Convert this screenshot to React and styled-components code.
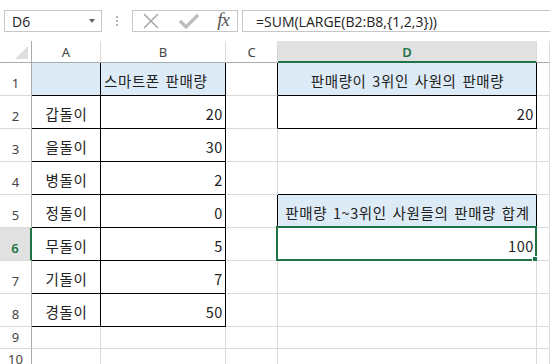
import React from 'react';
import styled, { createGlobalStyle } from 'styled-components';

const GlobalStyle = createGlobalStyle`
  html, body {
    margin: 0;
    padding: 0;
    background: #fff;
    overflow: hidden;
  }
  body {
    font-family: "Noto Sans CJK KR", "Noto Sans", sans-serif;
  }
`;

const GREEN = '#217346';
const GRID = '#dadada';
const HEAD_LINE = '#ababab';

const Page = styled.div`
  width: 550px;
  height: 364px;
  overflow: hidden;
  display: flex;
  flex-direction: column;
`;

const FormulaBar = styled.div`
  display: flex;
  align-items: stretch;
  height: 26px;
  padding: 10px 0 9px 4px;
`;

const NameBox = styled.div`
  width: 98px;
  box-sizing: border-box;
  border: 1px solid #c6c6c6;
  display: flex;
  align-items: center;
  justify-content: space-between;
  padding: 0 6px 0 7px;
  font-family: "Open Sans", "Noto Sans", sans-serif;
  font-size: 14px;
  color: #222;
`;

const Caret = styled.span`
  width: 0;
  height: 0;
  border-left: 3.5px solid transparent;
  border-right: 3.5px solid transparent;
  border-top: 4px solid #666;
`;

const Grip = styled.div`
  width: 30px;
  display: flex;
  flex-direction: column;
  align-items: center;
  justify-content: center;
  gap: 2px;
  & > span {
    width: 2px;
    height: 2px;
    background: #b5b5b5;
  }
`;

const ButtonGroup = styled.div`
  width: 106px;
  box-sizing: border-box;
  border: 1px solid #c6c6c6;
  display: flex;
  align-items: center;
  padding: 0 8px 0 9px;
  justify-content: space-between;
`;

const Fx = styled.span`
  font-family: "Liberation Serif", serif;
  font-style: italic;
  font-size: 19px;
  color: #555;
  letter-spacing: -1px;
  margin-top: -2px;
`;

const FormulaInput = styled.div`
  flex: 1;
  margin-left: 4px;
  box-sizing: border-box;
  border: 1px solid #c6c6c6;
  border-right: none;
  display: flex;
  align-items: center;
  padding-left: 13px;
  font-family: "Open Sans", "Noto Sans", sans-serif;
  font-size: 14px;
  color: #222;
`;

const Sheet = styled.div`
  display: grid;
  grid-template-columns: 32px 69px 125px 52px 259px 1fr;
  grid-template-rows: 22px repeat(8, 33px) 22px 22px;
`;

const Corner = styled.div`
  box-sizing: border-box;
  border-right: 1px solid ${HEAD_LINE};
  border-bottom: 1px solid ${HEAD_LINE};
  position: relative;
  &::after {
    content: '';
    position: absolute;
    right: 3px;
    bottom: 3px;
    width: 0;
    height: 0;
    border-left: 13px solid transparent;
    border-bottom: 13px solid #dfdfdf;
  }
`;

const ColHead = styled.div`
  box-sizing: border-box;
  background: ${p => (p.$active ? '#e1e1e1' : '#fff')};
  border-right: 1px solid ${GRID};
  border-bottom: ${p => (p.$active ? `2px solid ${GREEN}` : `1px solid ${HEAD_LINE}`)};
  display: flex;
  align-items: center;
  justify-content: center;
  padding-top: ${p => (p.$active ? '1px' : '0')};
  font-family: "Noto Sans", sans-serif;
  font-size: 13px;
  font-weight: ${p => (p.$active ? 600 : 400)};
  color: ${p => (p.$active ? GREEN : '#444')};
`;

const RowHead = styled.div`
  box-sizing: border-box;
  background: ${p => (p.$active ? '#e1e1e1' : '#fff')};
  border-right: ${p => (p.$active ? `2px solid ${GREEN}` : `1px solid ${HEAD_LINE}`)};
  border-bottom: 1px solid ${GRID};
  display: flex;
  align-items: flex-end;
  justify-content: center;
  padding-bottom: ${p => (p.$short ? '2px' : '3px')};
  font-family: "Noto Sans", sans-serif;
  font-size: 13px;
  font-weight: ${p => (p.$active ? 600 : 400)};
  color: ${p => (p.$active ? GREEN : '#444')};
`;

const Cell = styled.div`
  box-sizing: border-box;
  position: relative;
  background: ${p => (p.$fill ? '#ddebf7' : '#fff')};
  border-right: 1px solid ${p => (p.$r ? '#000' : GRID)};
  border-bottom: 1px solid ${p => (p.$b ? '#000' : GRID)};
  display: flex;
  align-items: flex-end;
  justify-content: ${p => ({ left: 'flex-start', center: 'center', right: 'flex-end' }[p.$align] || 'flex-start')};
  padding: 0 2px 5px 3px;
  white-space: nowrap;
  font-size: 14.5px;
  letter-spacing: 0.6px;
  word-spacing: 2px;
  line-height: 18px;
  color: #222;
`;

const Selection = styled.div`
  position: absolute;
  left: -2px;
  top: -2px;
  right: -1px;
  bottom: -1px;
  border: 2px solid ${GREEN};
  pointer-events: none;
  &::after {
    content: '';
    position: absolute;
    right: -5px;
    bottom: -5px;
    width: 6px;
    height: 6px;
    background: ${GREEN};
    border: 1px solid #fff;
  }
`;

const CrossIcon = () => (
  <svg width="18" height="18" viewBox="0 0 18 18">
    <path d="M2 2 L16 16 M16 2 L2 16" stroke="#a6a6a6" strokeWidth="1.5" fill="none" />
  </svg>
);

const CheckIcon = () => (
  <svg width="22" height="18" viewBox="0 0 22 18">
    <path d="M2 9 L8 15 L20 3" stroke="#bcbcbc" strokeWidth="3.2" fill="none" />
  </svg>
);

const names = ['갑돌이', '을돌이', '병돌이', '정돌이', '무돌이', '기돌이', '경돌이'];
const sales = [20, 30, 2, 0, 5, 7, 50];

// cell props per row for columns A..E (row index 1-based)
const buildRow = r => {
  const inTable = r >= 1 && r <= 8;
  const a = { $r: inTable, $b: inTable, $fill: r === 1, $align: 'center', text: r >= 2 && r <= 8 ? names[r - 2] : '' };
  const b = {
    $r: inTable,
    $b: inTable,
    $fill: r === 1,
    $align: r === 1 ? 'left' : 'right',
    text: r === 1 ? '스마트폰 판매량' : r >= 2 && r <= 8 ? String(sales[r - 2]) : '',
  };
  const dBoxed = [1, 2, 5, 6].includes(r);
  const c = { $r: dBoxed, $b: false, text: '' };
  const dText = { 1: '판매량이 3위인 사원의 판매량', 2: '20', 5: '판매량 1~3위인 사원들의 판매량 합계', 6: '100' };
  const d = {
    $r: dBoxed,
    $b: dBoxed || r === 4,
    $fill: r === 1 || r === 5,
    $align: r === 1 || r === 5 ? 'center' : 'right',
    text: dText[r] || '',
    selected: r === 6,
  };
  const e = { text: '' };
  return [a, b, c, d, e];
};

const rows = Array.from({ length: 10 }, (_, i) => i + 1);

export default function App() {
  return (
    <Page>
      <GlobalStyle />
      <FormulaBar>
        <NameBox>
          D6
          <Caret />
        </NameBox>
        <Grip>
          <span />
          <span />
          <span />
        </Grip>
        <ButtonGroup>
          <CrossIcon />
          <CheckIcon />
          <Fx>fx</Fx>
        </ButtonGroup>
        <FormulaInput>=SUM(LARGE(B2:B8,{'{'}1,2,3{'}'}))</FormulaInput>
      </FormulaBar>
      <Sheet>
        <Corner />
        {['A', 'B', 'C', 'D', ''].map((l, i) => (
          <ColHead key={i} $active={l === 'D'}>
            {l}
          </ColHead>
        ))}
        {rows.map(r => (
          <React.Fragment key={r}>
            <RowHead $active={r === 6} $short={r >= 9}>
              {r}
            </RowHead>
            {buildRow(r).map(({ text, selected, ...p }, i) => (
              <Cell key={i} {...p}>
                {text}
                {selected && <Selection />}
              </Cell>
            ))}
          </React.Fragment>
        ))}
      </Sheet>
    </Page>
  );
}
